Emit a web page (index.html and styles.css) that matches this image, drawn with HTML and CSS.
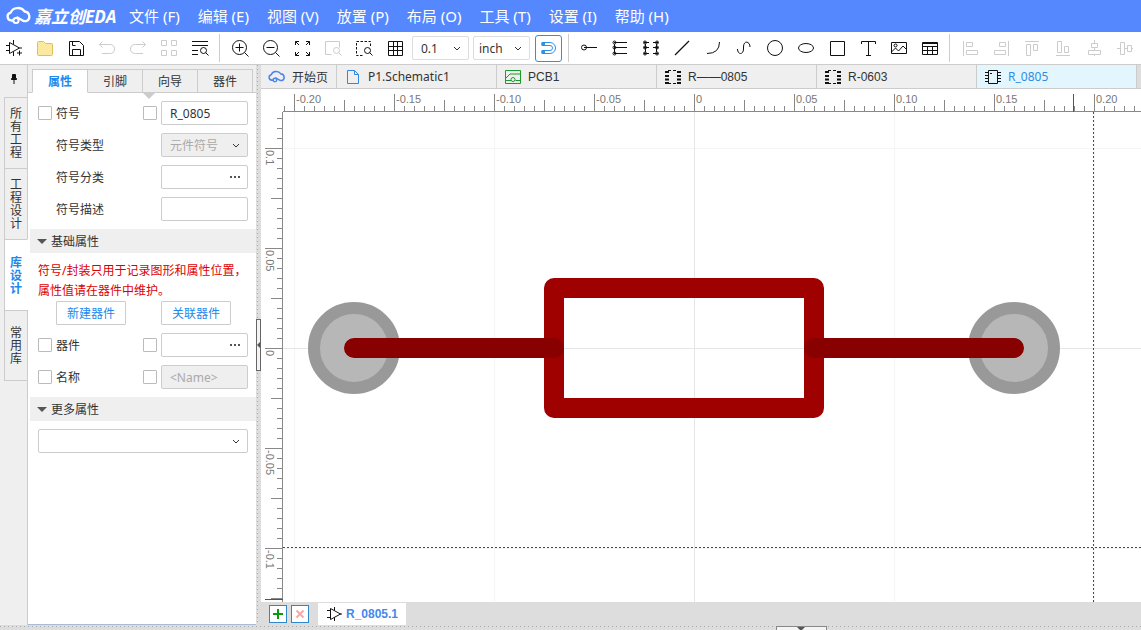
FILE: index.html
```html
<!DOCTYPE html>
<html lang="zh-CN">
<head>
<meta charset="utf-8">
<title>嘉立创EDA</title>
<link rel="stylesheet" href="styles.css">
</head>
<body>
<div class="app">
  <header class="menubar">
    <a class="brand" href="#">
      <svg class="brand-mark" width="26" height="20" viewBox="0 0 26 20"><path d="M8 14.500H5.500a4 4 0 0 1-.8-7.900 A7.500 6.500 0 0 1 18.500 5.500 A5 5 0 0 1 20 15.200 H18 L10.500 11" fill="none" stroke="#fff" stroke-width="2.300" stroke-linejoin="round"/><circle cx="10" cy="14.500" r="2.600" fill="#5588ff" stroke="#fff" stroke-width="2"/></svg>
      <span class="brand-name">嘉立创<b>EDA</b></span>
    </a>
    <nav class="menu">
      <a href="#">文件 (F)</a><a href="#">编辑 (E)</a><a href="#">视图 (V)</a><a href="#">放置 (P)</a><a href="#">布局 (O)</a><a href="#">工具 (T)</a><a href="#">设置 (I)</a><a href="#">帮助 (H)</a>
    </nav>
  </header>

  <div class="toolbar">
    <div class="tools">
      <button class="tool" aria-label="新建符号"><svg viewBox="0 0 24 24"><path d="M7.500 6.500v11l10-5.500zM4 9.500h3.500M4 14.500h3.500M17.500 12H20M11.500 4v4.500M11.500 15.500V20M17.500 14.500v5M15 17h5"/></svg></button>
      <button class="tool" aria-label="打开"><svg viewBox="0 0 24 24"><path class="folder" d="M4.500 6.500q0-1 1-1h5l2 2h6q1 0 1 1v10q0 1-1 1h-13q-1 0-1-1z"/></svg></button>
      <button class="tool" aria-label="保存"><svg viewBox="0 0 24 24"><path d="M5.500 5.500h10l4 4v10h-14zM8.500 19v-5.500h8V19M8.500 5.500v4h3"/></svg></button>
      <button class="tool muted" aria-label="撤销"><svg viewBox="0 0 24 24"><path d="M7.500 5.500l-3 3 3 3M4.500 8.500h10q5 0 5 4.500t-5 4.500H7"/></svg></button>
      <button class="tool muted" aria-label="重做"><svg viewBox="0 0 24 24"><path d="M16.500 5.500l3 3-3 3M19.500 8.500h-10q-5 0-5 4.500t5 4.500H17"/></svg></button>
      <button class="tool muted" aria-label="组合"><svg viewBox="0 0 24 24"><path d="M4.500 4.500h5v5h-5zM14.500 4.500h5v5h-5zM4.500 14.500h5v5h-5zM14.500 14.500h5v5h-5z"/></svg></button>
      <button class="tool" aria-label="查找"><svg viewBox="0 0 24 24"><path d="M4 5.500h16M4 9.500h16M4 14.500h6M4 18.500h6"/><circle cx="15.500" cy="14.500" r="3"/><path d="M17.700 16.700l2.800 2.800"/></svg></button>
    </div>
    <div class="tools">
      <button class="tool" aria-label="放大"><svg viewBox="0 0 24 24"><circle cx="11.500" cy="11.500" r="7"/><path d="M16.500 16.500l4 4M7.500 11.500h8M11.500 7.500v8"/></svg></button>
      <button class="tool" aria-label="缩小"><svg viewBox="0 0 24 24"><circle cx="11.500" cy="11.500" r="7"/><path d="M16.500 16.500l4 4M7.500 11.500h8"/></svg></button>
      <button class="tool" aria-label="适合全部"><svg viewBox="0 0 24 24"><path d="M5.500 9V5.500H9M5.500 5.500l3.500 3.500M16 5.500h3.500V9M19.500 5.500L16 9M5.500 16v3.500H9M5.500 19.500L9 16M16 19.500h3.500V16M19.500 19.500L16 16"/></svg></button>
      <button class="tool muted" aria-label="适合选中"><svg viewBox="0 0 24 24"><path d="M10.500 18.500h-6v-13h14v6"/><circle cx="15.500" cy="14.500" r="3"/><path d="M17.700 16.700l2.800 2.800"/></svg></button>
      <button class="tool" aria-label="区域缩放"><svg viewBox="0 0 24 24"><path d="M10.500 19.500h-6v-14h14v6" stroke-dasharray="2.500 1.500"/><circle cx="15.500" cy="14.500" r="3"/><path d="M17.700 16.700l2.800 2.800"/></svg></button>
      <button class="tool" aria-label="网格"><svg viewBox="0 0 24 24"><path d="M5.500 5.500h14v14h-14zM5.500 10.500h14M5.500 14.500h14M10.500 5.500v14M14.500 5.500v14"/></svg></button>
    </div>
    <div class="snap">
      <span class="select-box"><select aria-label="栅格尺寸" class="grid-size"><option>0.1</option></select><svg class="caret" viewBox="0 0 8 6"><path d="M1 1l3 3 3-3"/></svg></span>
      <span class="select-box"><select aria-label="单位" class="grid-unit"><option>inch</option></select><svg class="caret" viewBox="0 0 8 6"><path d="M1 1l3 3 3-3"/></svg></span>
      <button class="magnet" aria-label="吸附"><svg width="18" height="18" viewBox="0 0 18 18"><path d="M2 3.500h8a5.500 5.500 0 0 1 0 11H2v-3h8a2.500 2.500 0 0 0 0-5H2z"/><path d="M2 3.500h2.500v3H2zM2 11.500h2.500v3H2z" fill="#3090e8"/></svg></button>
    </div>
    <div class="tools">
      <button class="tool" aria-label="引脚"><svg viewBox="0 0 24 24"><circle cx="7" cy="11.500" r="2.500"/><path d="M7 11.500H20"/></svg></button>
      <button class="tool" aria-label="多引脚"><svg viewBox="0 0 24 24"><path d="M6 6.500h13M6 11.500h13M6 17.500h13M6.500 8v9"/><circle cx="6.500" cy="6.500" r="1.500"/><circle cx="6.500" cy="11.500" r="1.500"/><circle cx="6.500" cy="17.500" r="1.500"/></svg></button>
      <button class="tool" aria-label="引脚阵列"><svg viewBox="0 0 24 24"><path d="M5 6.500h5M5 11.500h5M5 17.500h5M14 6.500h5M14 11.500h5M14 17.500h5M6.500 8v8M17.500 8v8"/><circle cx="6" cy="6.500" r="1.500"/><circle cx="6" cy="11.500" r="1.500"/><circle cx="6" cy="17.500" r="1.500"/><circle cx="18" cy="6.500" r="1.500"/><circle cx="18" cy="11.500" r="1.500"/><circle cx="18" cy="17.500" r="1.500"/></svg></button>
      <button class="tool" aria-label="直线"><svg viewBox="0 0 24 24"><path d="M5 19L19 5" stroke-width="1.300"/></svg></button>
      <button class="tool" aria-label="圆弧"><svg viewBox="0 0 24 24"><path d="M18.500 6Q18.500 17.500 6 17.500"/></svg></button>
      <button class="tool" aria-label="曲线"><svg viewBox="0 0 24 24"><path d="M5.500 13c0 6 6 6 6 0V11c0-7 6.500-6 6.500 0"/></svg></button>
      <button class="tool" aria-label="圆"><svg viewBox="0 0 24 24"><circle cx="12" cy="12" r="7.500"/></svg></button>
      <button class="tool" aria-label="椭圆"><svg viewBox="0 0 24 24"><ellipse cx="12" cy="12" rx="7.500" ry="4.500"/></svg></button>
      <button class="tool" aria-label="矩形"><svg viewBox="0 0 24 24"><path d="M5.500 5.500h14v14h-14z"/></svg></button>
      <button class="tool" aria-label="文本"><svg viewBox="0 0 24 24"><path d="M5.500 8V5.500h14V8M12.500 5.500v14M10 19.500h5"/></svg></button>
      <button class="tool" aria-label="图片"><svg viewBox="0 0 24 24"><path d="M4.500 6.500h15v11h-15zM4.500 16l4-4 3 3 4.500-5 3.500 3.500"/><circle cx="8.500" cy="9.500" r="1.500"/></svg></button>
      <button class="tool" aria-label="表格"><svg viewBox="0 0 24 24"><path d="M4.500 6.500h15v12h-15zM4.500 7.500h15M4.500 10.500h15M4.500 14.500h15M9.500 10.500v8M14.500 10.500v8"/></svg></button>
    </div>
    <div class="tools">
      <button class="tool muted" aria-label="左对齐"><svg viewBox="0 0 24 24"><path d="M5.500 5v15M8.500 6.500h6v4h-6zM8.500 14.500h11v4h-11z"/></svg></button>
      <button class="tool muted" aria-label="右对齐"><svg viewBox="0 0 24 24"><path d="M19.500 5v15M10.500 6.500h6v4h-6zM5.500 14.500h11v4h-11z"/></svg></button>
      <button class="tool muted" aria-label="顶对齐"><svg viewBox="0 0 24 24"><path d="M5 5.500h14M6.500 8.500h4v11h-4zM13.500 8.500h4v6h-4z"/></svg></button>
      <button class="tool muted" aria-label="底对齐"><svg viewBox="0 0 24 24"><path d="M5 19.500h14M6.500 5.500h4v11h-4zM13.500 10.500h4v6h-4z"/></svg></button>
      <button class="tool muted" aria-label="水平居中"><svg viewBox="0 0 24 24"><path d="M12.500 4v3M12.500 11v3M12.500 18v2M9.500 7.500h6v4h-6zM6.500 14.500h12v4h-12z"/></svg></button>
      <button class="tool muted" aria-label="垂直居中"><svg viewBox="0 0 24 24"><path d="M4 12.500h3M11 12.500h3M18 12.500h2M7.500 6.500h4v12h-4zM14.500 9.500h4v6h-4z"/></svg></button>
    </div>
  </div>

  <div class="workspace">
    <div class="rail">
      <button class="pin" aria-label="固定"><svg width="10" height="12" viewBox="0 0 10 12"><path d="M3.500 1.500h3v4h1v1h-5v-1h1zM5 7v4" fill="#111" stroke="#111"/></svg></button>
      <button class="rail-tab">所有工程</button>
      <button class="rail-tab">工程设计</button>
      <button class="rail-tab active">库设计</button>
      <button class="rail-tab">常用库</button>
    </div>

    <aside class="panel">
      <div class="panel-tabs">
        <button class="panel-tab active">属性</button><button class="panel-tab">引脚</button><button class="panel-tab">向导</button><button class="panel-tab">器件</button>
      </div>
      <div class="fields">
        <div class="field"><input type="checkbox" id="show-symbol"><label for="show-symbol">符号</label><input type="checkbox" aria-label="显示符号值"><input class="box" type="text" aria-label="符号名称" value="R_0805"></div>
        <div class="field"><label for="kind">符号类型</label><span class="select-box"><select class="box" id="kind" disabled><option>元件符号</option></select><svg class="caret" viewBox="0 0 8 6"><path d="M1 1l3 3 3-3"/></svg></span></div>
        <div class="field"><label for="category">符号分类</label><span class="select-box"><input class="box" type="text" id="category"><button class="more" aria-label="选择分类"><i></i><i></i><i></i></button></span></div>
        <div class="field"><label for="desc">符号描述</label><input class="box" type="text" id="desc"></div>
      </div>
      <button class="section"><i class="fold"></i>基础属性</button>
      <p class="warning">符号/封装只用于记录图形和属性位置，属性值请在器件中维护。</p>
      <div class="actions"><button class="action">新建器件</button><button class="action">关联器件</button></div>
      <div class="fields">
        <div class="field"><input type="checkbox" id="show-device"><label for="show-device">器件</label><input type="checkbox" aria-label="显示器件值"><span class="select-box"><input class="box" type="text" aria-label="器件值"><button class="more" aria-label="选择器件"><i></i><i></i><i></i></button></span></div>
        <div class="field"><input type="checkbox" id="show-name"><label for="show-name">名称</label><input type="checkbox" aria-label="显示名称值"><input class="box hint" type="text" aria-label="名称值" placeholder="&lt;Name&gt;" disabled></div>
      </div>
      <button class="section"><i class="fold"></i>更多属性</button>
      <div class="extra"><span class="select-box"><select class="box" aria-label="更多属性"><option></option></select><svg class="caret" viewBox="0 0 8 6"><path d="M1 1l3 3 3-3"/></svg></span></div>
    </aside>

    <div class="splitter"><button class="grip" aria-label="收起左侧面板"><i></i></button></div>

    <main class="editor">
      <div class="doc-tabs">
        <button class="doc-tab home"><svg width="18" height="14" viewBox="0 0 26 20"><path d="M8 14.500H5.500a4 4 0 0 1-.8-7.900 A7.500 6.500 0 0 1 18.500 5.500 A5 5 0 0 1 20 15.200 H18 L10.500 11" fill="none" stroke="#4c83f0" stroke-width="2.200" stroke-linejoin="round"/><circle cx="10" cy="14.500" r="2.600" fill="#eee" stroke="#4c83f0" stroke-width="2"/></svg>开始页</button>
        <button class="doc-tab humanist"><svg width="18" height="16" viewBox="0 0 18 16"><path d="M3.500 1.500h7l4 4v9h-11zM10.500 1.500v4h4" fill="none" stroke="#3388dd"/></svg>P1.Schematic1</button>
        <button class="doc-tab"><svg width="18" height="16" viewBox="0 0 18 16"><path d="M1.500 1.500h15v13h-15zM2 9l4-4h10M2 11.500h5M11.500 11.500H16" fill="none" stroke="#1d9a2c"/><circle cx="9" cy="10.500" r="2" fill="none" stroke="#1d9a2c"/></svg>PCB1</button>
        <button class="doc-tab"><svg width="18" height="16" viewBox="0 0 18 16"><path d="M1 3h4M1 7h4M1 10.500h4M1 14h4M13 3h4M13 7h4M13 10.500h4M13 14h4" stroke="#111" stroke-width="2"/><path d="M4 1.500h10M4 14.500h10" stroke="#111" stroke-dasharray="3 2"/></svg>R——0805</button>
        <button class="doc-tab"><svg width="18" height="16" viewBox="0 0 18 16"><path d="M1 3h4M1 7h4M1 10.500h4M1 14h4M13 3h4M13 7h4M13 10.500h4M13 14h4" stroke="#111" stroke-width="2"/><path d="M4 1.500h10M4 14.500h10" stroke="#111" stroke-dasharray="3 2"/></svg>R-0603</button>
        <button class="doc-tab humanist active"><svg width="18" height="16" viewBox="0 0 18 16"><path d="M4.500 1.500h9v13h-9zM1 3.500h3M1 6.500h3M1 9.500h3M1 12.500h3M14 3.500h3M14 6.500h3M14 9.500h3M14 12.500h3M6 4.500h2" fill="none" stroke="#111"/></svg>R_0805</button>
      </div>

      <div class="stage">
        <svg class="drawing" id="drawing" role="img" aria-label="R_0805 电阻符号">
          <g transform="translate(433 259)">
            <g id="grid"></g>
            <g class="pad"><circle cx="-340" r="40"/><circle cx="320" r="40"/></g>
            <rect class="body" x="-140" y="-60" width="260" height="120"/>
            <path class="lead" d="M-340 0H-140M120 0H320"/>
            <path class="cursor" d="M-411 199.500H2000M399.500 -236V2000"/>
          </g>
          <rect class="ruler-bg" width="100%" height="22"/>
          <rect class="ruler-bg" width="21" height="100%"/>
          <path class="ruler-edge" d="M22 22.500H4000M21.500 23V4000"/>
          <g id="ruler" transform="translate(433 259)"></g>
          <path class="marker" d="M812.500 5v18M4 510.500h18"/>
        </svg>
      </div>

      <div class="part-bar">
        <button class="part-add" aria-label="添加部件"><svg width="16" height="16" viewBox="0 0 16 16"><path d="M8 3v10M3 8h10" stroke="#0a9a0a" stroke-width="2"/></svg></button>
        <button class="part-add" aria-label="删除部件"><svg width="16" height="16" viewBox="0 0 16 16"><path d="M4.500 4.500l7 7M11.500 4.500l-7 7" stroke="#f8a8a8" stroke-width="2"/></svg></button>
        <button class="part-tab"><svg width="16" height="16" viewBox="0 0 16 16"><path d="M4.500 2.500v11l10-5.500zM1 4.500h3.500M1 11.500h3.500M14 8h2M8.500 1v3.500M8.500 11.500V15" fill="none" stroke="#111"/></svg>R_0805.1</button>
      </div>
    </main>
  </div>
  <div class="bottom-splitter"><button class="bottom-grip" aria-label="展开底部面板"><i></i></button></div>
</div>
<script src="ruler.js"></script>
</body>
</html>
```
FILE: ruler.js
```js
const NS = "http://www.w3.org/2000/svg";
const STEP = 10;
const MAJOR = 100;
const LABEL_ROOM = 30;
const ORIGIN = { x: 433, y: 259 };

const drawing = document.getElementById("drawing");
const grid = document.getElementById("grid");
const ruler = document.getElementById("ruler");
const size = p => p % MAJOR === 0 ? 18 : p % 50 === 0 ? 12 : 6;

function add(parent, name, attrs, text) {
  const el = document.createElementNS(NS, name);
  for (const key in attrs) el.setAttribute(key, attrs[key]);
  if (text) el.textContent = text;
  parent.appendChild(el);
}

function draw() {
  const box = drawing.getBoundingClientRect();
  const right = box.width - ORIGIN.x;
  const bottom = box.height - ORIGIN.y;
  grid.replaceChildren();
  ruler.replaceChildren();

  for (let p = -400; p <= Math.max(right, bottom); p += 200) {
    const cls = p === 0 ? "axis" : "grid-line";
    add(grid, "path", { class: cls, d: `M${p + 0.5} -236V${bottom}` });
    add(grid, "path", { class: cls, d: `M-411 ${p + 0.5}H${right}` });
  }

  for (let x = -410; x <= right; x += STEP) {
    add(ruler, "path", { class: "tick", d: `M${x + 0.5} -236v${-size(x)}` });
    if (x % MAJOR === 0 && x < right - LABEL_ROOM) {
      const label = x === 0 ? "0" : (x / 2000).toFixed(2);
      add(ruler, "text", { class: "tick-label", x: x + 2, y: -245 }, label);
    }
  }

  for (let y = -230; y <= bottom; y += STEP) {
    add(ruler, "path", { class: "tick", d: `M-411 ${y + 0.5}h${-size(y)}` });
    if (y % MAJOR === 0 && y < bottom - LABEL_ROOM) {
      const label = y === 0 ? "0" : String(-y / 2000);
      add(ruler, "text", { class: "tick-label", transform: `translate(-428 ${y + 2}) rotate(90)` }, label);
    }
  }
}

draw();
window.addEventListener("resize", draw);
```
FILE: styles.css
```css
* { box-sizing: border-box; }
body { margin: 0; font: 12px "Noto Sans", "Noto Sans CJK SC", sans-serif; color: #333; }
button, input, select { font: inherit; color: inherit; margin: 0; padding: 0; border: 0; background: none; border-radius: 0; }
button { cursor: pointer; }
a { color: inherit; text-decoration: none; }
svg { display: block; flex: none; }

.app { height: 100vh; display: flex; flex-direction: column; overflow: hidden; background: #efefef; }

.menubar { flex: none; height: 32px; display: flex; align-items: center; background: #5588ff; color: #fff; padding-left: 6px; }
.brand { display: flex; align-items: center; gap: 2px; width: 123px; white-space: nowrap; }
.brand-name { font: italic 700 17px/24px "Noto Sans CJK SC", sans-serif; }
.brand-name b { font: italic 700 17px/24px "Open Sans", sans-serif; }
.menu { display: flex; gap: 18px; font-size: 15px; line-height: 20px; white-space: nowrap; }

.toolbar { flex: none; height: 33px; display: flex; align-items: center; background: #fff; border-bottom: 1px solid #ccc; overflow: hidden; }
.tools { display: flex; flex: none; gap: 7px; padding: 2px 7px 2px 8px; }
.tools:first-child { padding-left: 2px; }
.tools + .tools, .snap + .tools { border-left: 1px solid #ccc; }
.tools:has(+ .snap) { padding-right: 5px; }
.tool { width: 24px; height: 24px; }
.tool svg { width: 24px; height: 24px; fill: none; stroke: #111; }
.tool.muted svg { stroke: #ccc; }
.tool .folder { fill: #fbe9a0; stroke: #dcc060; }
.snap { display: flex; flex: none; align-items: center; gap: 4px; padding-right: 6px; }
.snap select { width: 57px; height: 24px; padding-left: 8px; border: 1px solid #ddd; border-radius: 2px; background: #fff; }
.snap .grid-unit { padding-left: 5px; }
.magnet { width: 27px; height: 27px; margin-left: 1px; display: grid; place-items: center; border: 1px solid #3090e8; border-radius: 3px; }
.magnet svg { fill: none; stroke: #3090e8; }

select { appearance: none; opacity: 1; }
.select-box { position: relative; display: flex; }
.caret { position: absolute; right: 8px; top: 10px; width: 8px; height: 6px; fill: none; stroke: #333; pointer-events: none; }

.workspace { flex: 1; min-height: 0; display: flex; }
.rail { flex: none; width: 28px; padding-left: 4px; display: flex; flex-direction: column; border-right: 1px solid #ccc; }
.pin { height: 32px; padding: 2px 0 6px 5px; display: flex; align-items: center; }
.rail-tab { height: 71px; width: 24px; margin-right: -1px; padding: 0 6px 0 5px; border: 1px solid #ccc; border-bottom: 0; line-height: 13px; word-break: break-all; background: #efefef; }
.rail-tab:last-child { border-bottom: 1px solid #ccc; }
.rail-tab.active { background: #fff; color: #2288ee; border-right-color: #fff; font-weight: 700; }

.panel { flex: none; width: 228px; background: #fff; border-bottom: 1px solid #a8bcd8; overflow: hidden; }
.panel-tabs { position: relative; display: flex; height: 28px; padding: 4px 3px 0 4px; background: #efefef; }
.panel-tabs::before { content: ""; position: absolute; left: 0; right: 0; bottom: 0; height: 1px; background: #ccc; }
.panel-tabs::after { content: ""; position: absolute; left: 115px; top: 28px; border: 6px solid transparent; border-top-color: #ccc; border-bottom: 0; }
.panel-tab { position: relative; flex: 1; border: 1px solid #ccc; border-left-width: 0; background: #efefef; }
.panel-tab.active { background: #fff; color: #2288ee; font-weight: 700; border-left-width: 1px; border-bottom-color: #fff; }

.fields { display: flex; flex-direction: column; gap: 8px; padding: 8px 8px 8px 10px; }
.field { display: flex; align-items: center; height: 24px; }
.field label { flex: 1; line-height: 18px; padding: 2px 0 0 18px; }
.field input[type=checkbox] { appearance: none; flex: none; width: 14px; height: 14px; border: 1px solid #bbb; border-radius: 1px; background: #fff; }
.field input[type=checkbox] + label { padding-left: 4px; }
.field .box { width: 87px; }
.field input[type=checkbox] + .box, .field input[type=checkbox] + .select-box { margin-left: 4px; }
.box { height: 24px; padding: 0 8px; border: 1px solid #ccc; border-radius: 2px; background: #fff; }
.box:disabled { background: #efefef; color: #aaa; opacity: 1; }
.box.hint::placeholder { color: #aaa; }
.more { position: absolute; right: 8px; top: 5px; width: 10px; height: 14px; display: flex; align-items: center; justify-content: space-between; }
.more i { width: 2px; height: 2px; background: #555; }
.section { display: flex; align-items: center; gap: 4px; width: 226px; height: 24px; margin-left: 2px; padding-left: 7px; background: #efefef; }
.fold { border: 5px solid transparent; border-top-color: #555; border-bottom: 0; }
.warning { margin: 8px 8px 0 10px; line-height: 20px; color: #d00; }
.actions { display: flex; gap: 35px; padding-left: 28px; }
.action { width: 70px; height: 24px; border: 1px solid #ccc; border-radius: 1px; background: #fff; color: #2288ee; }
.extra { padding: 8px 8px 8px 10px; }
.extra .select-box, .extra .box { width: 100%; }

.splitter { flex: none; width: 5px; display: flex; align-items: center; background: repeating-linear-gradient(#aaa 0 1px, transparent 1px 4px) 1px 0 / 1px 100% no-repeat, #ddd; }
.grip { width: 5px; height: 52px; display: grid; place-items: center end; border: 1px solid #666; background: #f4f4f4; }
.grip i { border: 3px solid transparent; border-right-color: #555; border-left: 0; }

.editor { flex: 1; min-width: 0; display: flex; flex-direction: column; background: #ddd; }
.doc-tabs { flex: none; display: flex; height: 24px; border-bottom: 1px solid #ccc; }
.doc-tab { flex: 0 1 160px; min-width: 0; display: flex; align-items: center; gap: 6px; padding-left: 7px; border-right: 1px solid #ccc; background: #efefef; font-family: "Liberation Sans", "Noto Sans CJK SC", sans-serif; white-space: nowrap; }
.doc-tab.home { flex-basis: 76px; }
.doc-tab.humanist { font-family: "Noto Sans", sans-serif; }
.doc-tab.active { background: #e4f6fd; color: #2f8be0; }

.stage { flex: 1; min-height: 0; background: #fff; }
.drawing { width: 100%; height: 100%; }
.grid-line { stroke: #f5f5f5; }
.axis { stroke: #e6e6e6; }
.pad { fill: #b7b7b7; stroke: #999; stroke-width: 12px; }
.body { fill: none; stroke: #9f0000; stroke-width: 20px; stroke-linejoin: round; }
.lead { fill: none; stroke: #880000; stroke-width: 20px; stroke-linecap: round; }
.cursor { fill: none; stroke: #c41420; stroke-dasharray: 2 2; }
.ruler-bg { fill: #fff; }
.ruler-edge, .tick { fill: none; stroke: #888; }
.tick-label { fill: #777; font: 11px "Liberation Sans", sans-serif; }
.marker { fill: none; stroke: #0070a8; }

.part-bar { flex: none; height: 23px; display: flex; align-items: center; gap: 4px; padding-left: 8px; }
.part-add { width: 18px; height: 18px; display: grid; place-items: center; border: 1px solid #3088cc; background: #fff; }
.part-tab { display: flex; align-items: center; gap: 4px; height: 22px; margin-left: 5px; padding: 0 8px; background: #fff; color: #4488ee; font: 700 12px "Liberation Sans", sans-serif; }

.bottom-splitter { flex: none; height: 5px; display: flex; background: repeating-linear-gradient(90deg, #aaa 0 1px, transparent 1px 4px) 0 1px / 100% 1px no-repeat, #ddd; }
.bottom-grip { width: 51px; height: 5px; margin: 1px 0 0 68%; display: flex; justify-content: center; border: 1px solid #888; border-bottom: 0; background: #f4f4f4; }
.bottom-grip i { border: 4px solid transparent; border-top-color: #555; border-bottom: 0; }
```
